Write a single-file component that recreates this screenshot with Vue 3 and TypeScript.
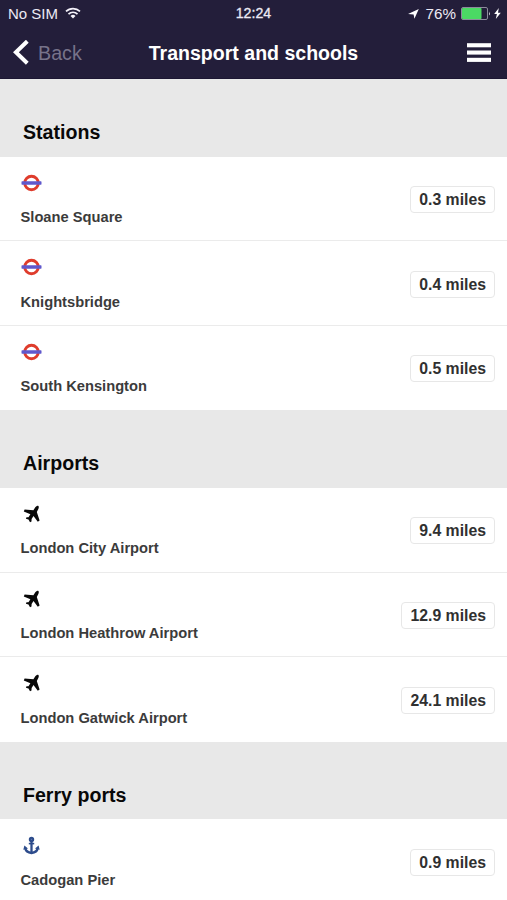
<script setup lang="ts">
type Kind = 'tube' | 'plane' | 'anchor'
interface Place { name: string; miles: string }
interface Section { title: string; kind: Kind; places: Place[] }

const sections: Section[] = [
  {
    title: 'Stations',
    kind: 'tube',
    places: [
      { name: 'Sloane Square', miles: '0.3' },
      { name: 'Knightsbridge', miles: '0.4' },
      { name: 'South Kensington', miles: '0.5' },
    ],
  },
  {
    title: 'Airports',
    kind: 'plane',
    places: [
      { name: 'London City Airport', miles: '9.4' },
      { name: 'London Heathrow Airport', miles: '12.9' },
      { name: 'London Gatwick Airport', miles: '24.1' },
    ],
  },
  {
    title: 'Ferry ports',
    kind: 'anchor',
    places: [{ name: 'Cadogan Pier', miles: '0.9' }],
  },
]
</script>

<template>
  <div class="screen">
    <header class="top">
      <div class="status">
        <div class="carrier">
          <span>No SIM</span>
          <svg class="wifi" width="16" height="12" viewBox="0 0 16 12" fill="none" stroke="#f4f2fa" stroke-width="1.7">
            <path d="M1 4.4a10 10 0 0 1 14 0" />
            <path d="M3.5 7.1a6.4 6.4 0 0 1 9 0" />
            <path d="M8 11.4 5.5 8.9a3.6 3.6 0 0 1 5 0z" fill="#f4f2fa" stroke="none" />
          </svg>
        </div>
        <span class="clock">12:24</span>
        <div class="power">
          <svg width="11" height="10" viewBox="0 0 11 10"><path d="M10.8 0 6.4 9.8 5.6 5.4 0 5z" fill="#fff" /></svg>
          <span class="percent">76%</span>
          <svg class="battery" width="30" height="13" viewBox="0 0 30 13">
            <rect x=".5" y=".5" width="26" height="12" rx="1.5" fill="none" stroke="#8d8a9c" />
            <rect x="1" y="1" width="19.5" height="11" rx=".8" fill="#4bd964" />
            <path d="M28 4.4q1.8 2.1 0 4.2z" fill="#d8d6e0" />
          </svg>
          <svg width="7" height="11" viewBox="0 0 7 11"><path d="M4.8 0 .2 6h2.7L1.8 11 6.8 4.8H4z" fill="#fff" /></svg>
        </div>
      </div>
      <nav class="bar">
        <div class="back">
          <svg width="17" height="26" viewBox="0 0 17 26"><path d="M15.3 1.2 3.9 12.2l11.4 11" fill="none" stroke="#fff" stroke-width="4" /></svg>
          <span>Back</span>
        </div>
        <h1>Transport and schools</h1>
        <svg class="menu" width="24" height="20" viewBox="0 0 24 20" fill="#fff">
          <rect y=".2" width="24" height="4.1" />
          <rect y="7.5" width="24" height="4.1" />
          <rect y="14.8" width="24" height="4.1" />
        </svg>
      </nav>
    </header>

    <section v-for="s in sections" :key="s.title">
      <h2>{{ s.title }}</h2>
      <ul>
        <li v-for="p in s.places" :key="p.name">
          <div class="place">
            <svg v-if="s.kind === 'tube'" class="icon" viewBox="0 0 20 20">
              <circle cx="10" cy="10" r="6.8" fill="#fff" stroke="#df3c2c" stroke-width="2.9" />
              <rect x="0" y="8.3" width="20" height="3.4" rx=".6" fill="#6058cc" />
            </svg>
            <svg v-else-if="s.kind === 'plane'" class="icon" viewBox="0 0 20 20">
              <path d="M16.6 1.8C15.6 1.2 14.3 2.4 13.5 3.7L11.9 6.2 3.1 5.6 2.3 7.6 8.9 10.2 7 13.2 5 13.2 4.4 14.8 7 15.5 8.5 18.2 10 17.5 10.1 15 12 12 16.3 17.7 18.1 16.6 15.3 8.1 16.7 5.3C17.4 3.9 17.6 2.4 16.6 1.8z" fill="#080808" />
            </svg>
            <svg v-else class="icon" viewBox="0 0 20 20" fill="none" stroke="#2d4c8c">
              <circle cx="10" cy="3.4" r="1.7" stroke-width="2" fill="#5c74ab" />
              <path d="M10 5V17" stroke-width="2.3" />
              <path d="M7.3 7.6h5.4" stroke-width="1.6" />
              <path d="M3.8 12.3C4.4 15.6 6.9 16.7 10 17c3.1-.3 5.6-1.4 6.2-4.7" stroke-width="2.4" />
              <path d="M1.8 13.8 2.9 9.6l3.6 3zM18.2 13.8 17.1 9.6l-3.6 3z" fill="#2d4c8c" stroke="none" />
            </svg>
            <span class="name">{{ p.name }}</span>
          </div>
          <span class="badge">{{ p.miles }} miles</span>
        </li>
      </ul>
    </section>
  </div>
</template>

<style>
body { background: #fff; }
</style>

<style scoped>
.screen {
  width: 507px;
  height: 900px;
  overflow: hidden;
  background: #fff;
  font-family: "Liberation Sans", Arial, sans-serif;
}
.top {
  box-sizing: border-box;
  height: 79px;
  background: #231e3a;
  color: #fff;
  border-bottom: 1px solid #1c1733;
}
.status {
  display: grid;
  grid-template-columns: 1fr auto 1fr;
  align-items: center;
  height: 27px;
  padding: 0 6px 0 8px;
  font-size: 15px;
  line-height: 27px;
  color: #eceaf4;
}
.carrier, .power { display: flex; align-items: center; }
.carrier { gap: 7px; font-size: 15px; }
.wifi { margin-top: -2px; }
.clock { margin-right: 2px; font-size: 14.2px; font-weight: 500; -webkit-text-stroke: .3px #eceaf4; }
.power { justify-content: flex-end; }
.percent { margin: 0 5px 0 7px; font-size: 15.2px; }
.battery { margin-right: 3px; }
.bar {
  display: grid;
  grid-template-columns: 1fr auto 1fr;
  align-items: center;
  height: 51px;
  padding: 0 16px 0 12px;
}
.back { display: flex; align-items: center; gap: 9px; font-size: 19.7px; line-height: 26px; color: #77738a; }
.back span { padding-top: 1px; }
h1 { margin: 0; padding-left: 4px; font-size: 19.55px; line-height: 24px; font-weight: 700; }
.menu { justify-self: end; }
h2 {
  box-sizing: border-box;
  height: 77.6px;
  margin: 0;
  padding: 41px 23px 0;
  background: #e8e8e8;
  color: #080808;
  font-size: 19.6px;
  line-height: 24px;
}
ul { margin: 0; padding: 0; list-style: none; }
li {
  box-sizing: border-box;
  display: flex;
  justify-content: space-between;
  align-items: flex-start;
  height: 84.6px;
  padding: 16.2px 12px 0 20.5px;
  border-bottom: 1.5px solid #ebebeb;
}
li:last-child { border-bottom: 0; }
.place { display: flex; flex-direction: column; }
.icon { width: 21px; height: 20px; margin-left: .5px; }
.name { margin-top: 14.3px; font-size: 14.7px; line-height: 20px; font-weight: 700; color: #3b3b3b; }
.badge {
  box-sizing: border-box;
  height: 27px;
  margin-top: 13.3px;
  padding: 0 8px;
  border: 1px solid #e7e7e7;
  border-radius: 4px;
  font-size: 15.8px;
  line-height: 26px;
  font-weight: 700;
  color: #303030;
}
</style>
